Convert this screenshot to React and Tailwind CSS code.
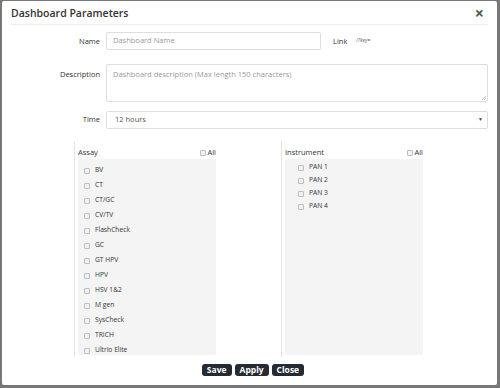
export default function App() {
  const assays = ["BV", "CT", "CT/GC", "CV/TV", "FlashCheck", "GC", "GT HPV", "HPV", "HSV 1&2", "M gen", "SysCheck", "TRICH", "Ultrio Elite"];
  const instruments = ["PAN 1", "PAN 2", "PAN 3", "PAN 4"];
  const Box = () => (
    <span className="inline-block w-[6px] h-[6px] rounded-[1px] border border-[#bdbdbd] bg-[#f2f2f2] shrink-0" />
  );
  const label = "text-[7.5px] text-[#333] font-medium";
  return (
    <div className="w-[500px] h-[388px] bg-[#777777] pl-[2px] pt-[1px] overflow-hidden" style={{ fontFamily: '"Open Sans", sans-serif' }}>
      <div className="w-[495px] h-[384px] bg-white rounded-[2px] flex flex-col">
        <div className="mx-[9px] h-[24px] border-b border-[#eeeeee] flex items-center justify-between">
          <span className="text-[10.5px] font-semibold text-[#333] leading-none pt-[2px]">Dashboard Parameters</span>
          <span className="text-[16px] font-bold text-[#555] leading-none mr-[4px] pt-[1px]">×</span>
        </div>
        <div className="flex items-start mt-[7px]">
          <div className={`w-[98px] text-right pt-[4px] ${label}`}>Name</div>
          <div className="ml-[6px] w-[215px] h-[18px] border border-[#dddddd] rounded-[2px] flex items-center pl-[6px] text-[7.5px] text-[#999]">Dashboard Name</div>
          <div className={`ml-[12px] pt-[4px] ${label}`}>Link</div>
          <div className="ml-[9px] pt-[5px] text-[5px] text-[#555] italic">/?key=</div>
        </div>
        <div className="flex items-start mt-[14px]">
          <div className={`w-[98px] text-right pt-[5px] ${label}`}>Description</div>
          <div className="relative ml-[6px] w-[382px] h-[38px] border border-[#dddddd] rounded-[2px] pl-[6px] pt-[4px] text-[7.5px] text-[#999]">
            Dashboard description (Max length 150 characters)
            <svg className="absolute right-[1px] bottom-[1px]" width="5" height="5" viewBox="0 0 5 5">
              <path d="M1 5 L5 1 M3 5 L5 3" stroke="#aaa" strokeWidth="0.7" />
            </svg>
          </div>
        </div>
        <div className="flex items-start mt-[9px]">
          <div className={`w-[98px] text-right pt-[3px] ${label}`}>Time</div>
          <div className="ml-[6px] w-[382px] h-[18px] border border-[#dddddd] rounded-[2px] flex items-center justify-between pl-[8px] pr-[4px] text-[7.5px] text-[#555]">
            <span>12 hours</span>
            <span className="text-[5px] text-[#444]">▼</span>
          </div>
        </div>
        <div className="flex mt-[12px] ml-[72px]">
          <div className="w-[207px] border-l border-[#e5e5e5] pl-[3px] h-[216px]">
            <div className="w-[138px] flex items-center justify-between pt-[5px] h-[18px]">
              <span className={label}>Assay</span>
              <span className="flex items-center gap-[1px]"><Box /><span className="text-[7.5px] text-[#333]">All</span></span>
            </div>
            <div className="w-[138px] h-[196px] bg-[#f4f4f4] rounded-[2px] pl-[6px] pt-[4px]">
              {assays.map((a) => (
                <div key={a} className="h-[15px] flex items-center gap-[5px]">
                  <Box />
                  <span className="text-[6.7px] text-[#333]">{a}</span>
                </div>
              ))}
            </div>
          </div>
          <div className="w-[207px] border-l border-[#e5e5e5] pl-[3px] h-[216px]">
            <div className="w-[138px] flex items-center justify-between pt-[5px] h-[18px]">
              <span className={label}>Instrument</span>
              <span className="flex items-center gap-[1px]"><Box /><span className="text-[7.5px] text-[#333]">All</span></span>
            </div>
            <div className="w-[138px] h-[196px] bg-[#f4f4f4] rounded-[2px] pl-[13px] pt-[2px]">
              {instruments.map((a) => (
                <div key={a} className="h-[13px] flex items-center gap-[5px]">
                  <Box />
                  <span className="text-[6.7px] text-[#333]">{a}</span>
                </div>
              ))}
            </div>
          </div>
        </div>
        <div className="flex justify-center gap-[3px] mt-[7px] ml-[7px]">
          {["Save", "Apply", "Close"].map((b) => (
            <span key={b} className="h-[12px] px-[5px] rounded-[3px] bg-[#252a33] text-white text-[8.5px] font-bold flex items-center leading-none">{b}</span>
          ))}
        </div>
      </div>
    </div>
  );
}
